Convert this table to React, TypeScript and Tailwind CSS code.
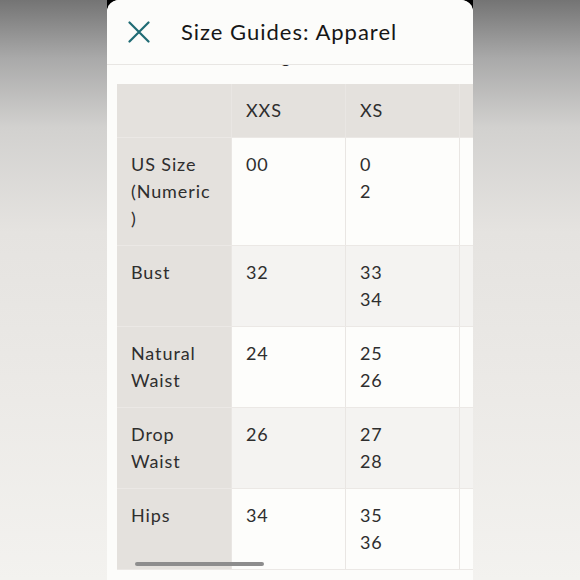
import React from "react";

const rows: { label: React.ReactNode; a: string[]; b: string[]; alt: boolean }[] = [
  { label: <>US Size<br />(Numeric<br />)</>, a: ["00"], b: ["0", "2"], alt: false },
  { label: "Bust", a: ["32"], b: ["33", "34"], alt: true },
  { label: <>Natural<br />Waist</>, a: ["24"], b: ["25", "26"], alt: false },
  { label: <>Drop<br />Waist</>, a: ["26"], b: ["27", "28"], alt: true },
  { label: "Hips", a: ["34"], b: ["35", "36"], alt: false },
];

function Cell({ children, className = "" }: { children: React.ReactNode; className?: string }) {
  return (
    <div className={`px-[14px] pt-[13px] pb-[13px] border-r border-[#e9e6e3] ${className}`}>{children}</div>
  );
}

export default function App() {
  return (
    <div
      className="w-[580px] h-[580px] overflow-hidden flex justify-center bg-[linear-gradient(to_bottom,#747474_0%,#a9a9a9_10%,#d2d1cf_22%,#e5e3e0_40%,#ebe9e6_65%,#f3f2ef_100%)]"
      style={{ fontFamily: "Lato, 'Open Sans', sans-serif" }}
    >
      <div className="w-[366px] h-full bg-[linear-gradient(to_bottom,#000_0px,#000_10px,transparent_10px)]">
        <div className="w-full h-full bg-[#fcfcfa] rounded-t-[12px] flex flex-col overflow-hidden">
          <div className="h-[65px] shrink-0 flex items-center border-b border-[#e8e6e3] pl-[21px] relative z-10 bg-[#fcfcfa]">
            <svg width="22" height="22" viewBox="0 0 22 22" fill="none" stroke="#1f6b74" strokeWidth="2.2" strokeLinecap="round">
              <path d="M1.5 1.5 L20.5 20.5 M20.5 1.5 L1.5 20.5" />
            </svg>
            <div className="ml-[31px] text-[22px] text-[#161616] tracking-[1px] -mt-[2px]">Size Guides: Apparel</div>
          </div>
          <div className="h-[19px] shrink-0 relative">
            <div className="absolute left-[174px] -top-[22px] text-[18px] leading-[27px] text-[#222]">g</div>
          </div>
          <div className="ml-[10px] flex-1 overflow-hidden relative">
            <div className="flex flex-col w-[480px] text-[18px] leading-[27px] text-[#2e2e2e] tracking-[0.9px]">
              <div className="grid grid-cols-[115px_114px_114px_114px] bg-[#e4e1dd] border-b border-[#ebe8e5]">
                <Cell>&nbsp;</Cell>
                <Cell>XXS</Cell>
                <Cell>XS</Cell>
                <Cell>&nbsp;</Cell>
              </div>
              {rows.map((r, i) => (
                <div
                  key={i}
                  className={`grid grid-cols-[115px_114px_114px_114px] border-b border-[#ebe8e5] ${r.alt ? "bg-[#f4f3f1]" : "bg-[#fdfdfb]"}`}
                >
                  <Cell className="bg-[#e4e1dd]">{r.label}</Cell>
                  <Cell>{r.a.map((v) => <div key={v}>{v}</div>)}</Cell>
                  <Cell>{r.b.map((v) => <div key={v}>{v}</div>)}</Cell>
                  <Cell>&nbsp;</Cell>
                </div>
              ))}
            </div>
            <div className="absolute left-[18px] top-[478px] w-[129px] h-[4px] rounded-full bg-[#8d8d8d]" />
          </div>
        </div>
      </div>
    </div>
  );
}
